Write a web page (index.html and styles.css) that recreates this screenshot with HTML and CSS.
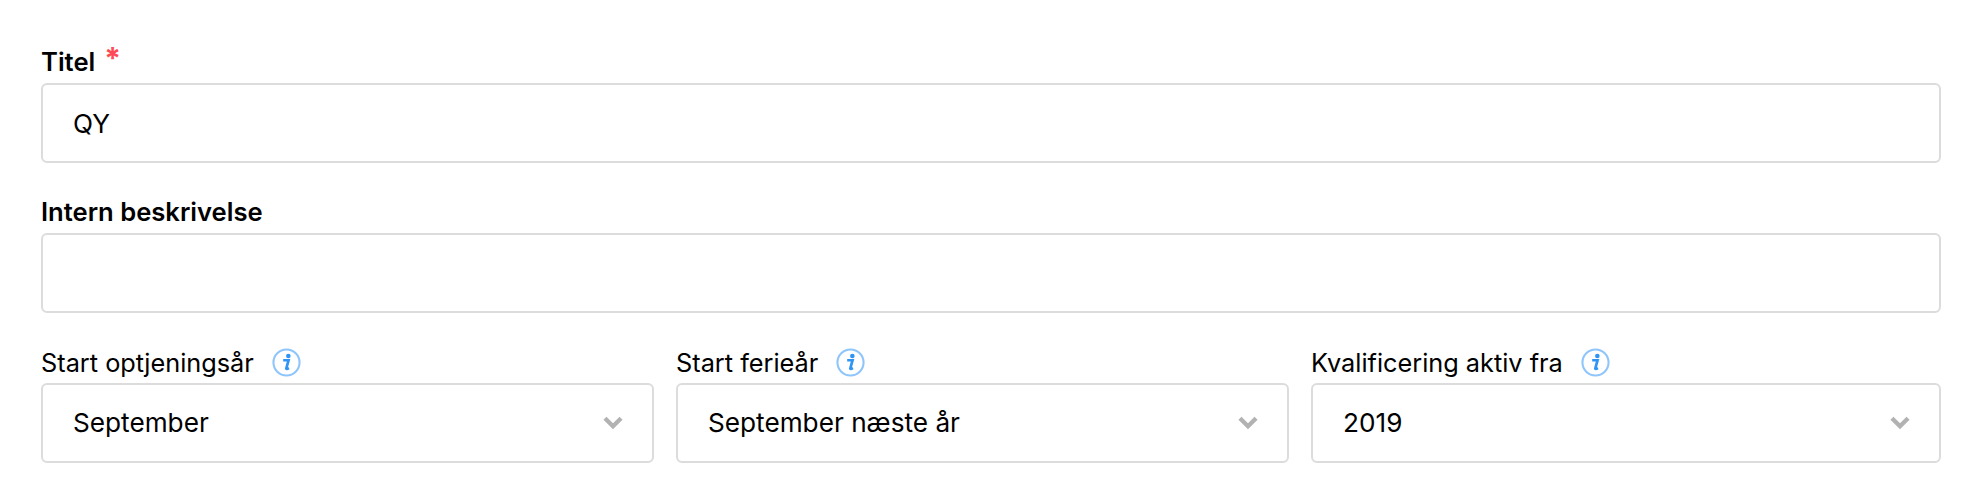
FILE: index.html
```html
<!DOCTYPE html>
<html lang="da">
<head>
  <meta charset="UTF-8">
  <title>Ferieregel</title>
  <link rel="stylesheet" href="styles.css">
</head>
<body>
  <form class="form">
    <div class="field field-title">
      <label class="label label-strong">Titel<span class="required">*</span></label>
      <div class="input">QY</div>
    </div>
    <div class="field field-desc">
      <label class="label label-strong">Intern beskrivelse</label>
      <div class="input"></div>
    </div>
    <div class="row">
      <div class="field">
        <label class="label"><span>Start optjeningsår</span><svg class="info" viewBox="0 0 28 28"><circle cx="14" cy="14" r="12.6" fill="none" stroke="#8ec5fb" stroke-width="2"/><circle cx="15.8" cy="7.8" r="2.2" fill="#2f95f5"/><path d="M10.8 11.8h5.2l-2.2 8c-.1.6.5.6 2.6-.4" fill="none" stroke="#2f95f5" stroke-width="2.6"/></svg></label>
        <div class="input select"><span>September</span><svg class="chevron" viewBox="0 0 20 14"><path d="M2.5 3l7.5 7.5L17.5 3" fill="none" stroke="#b2b2b2" stroke-width="4"/></svg></div>
      </div>
      <div class="field">
        <label class="label"><span>Start ferieår</span><svg class="info" viewBox="0 0 28 28"><circle cx="14" cy="14" r="12.6" fill="none" stroke="#8ec5fb" stroke-width="2"/><circle cx="15.8" cy="7.8" r="2.2" fill="#2f95f5"/><path d="M10.8 11.8h5.2l-2.2 8c-.1.6.5.6 2.6-.4" fill="none" stroke="#2f95f5" stroke-width="2.6"/></svg></label>
        <div class="input select"><span>September næste år</span><svg class="chevron" viewBox="0 0 20 14"><path d="M2.5 3l7.5 7.5L17.5 3" fill="none" stroke="#b2b2b2" stroke-width="4"/></svg></div>
      </div>
      <div class="field">
        <label class="label"><span>Kvalificering aktiv fra</span><svg class="info" viewBox="0 0 28 28"><circle cx="14" cy="14" r="12.6" fill="none" stroke="#8ec5fb" stroke-width="2"/><circle cx="15.8" cy="7.8" r="2.2" fill="#2f95f5"/><path d="M10.8 11.8h5.2l-2.2 8c-.1.6.5.6 2.6-.4" fill="none" stroke="#2f95f5" stroke-width="2.6"/></svg></label>
        <div class="input select"><span>2019</span><svg class="chevron" viewBox="0 0 20 14"><path d="M2.5 3l7.5 7.5L17.5 3" fill="none" stroke="#b2b2b2" stroke-width="4"/></svg></div>
      </div>
    </div>
  </form>
</body>
</html>
```
FILE: styles.css
```css
body {
  margin: 0;
  background: #fff;
  color: #000;
  font-family: "Inter", "Liberation Sans", sans-serif;
  font-size: 25.3px;
}
.form {
  padding: 42px 33px 28px 41px;
}
.field-desc {
  margin-top: 29px;
}
.row {
  display: grid;
  grid-template-columns: 613px 613px 1fr;
  column-gap: 22px;
  margin-top: 29px;
}
.label {
  display: flex;
  align-items: center;
  box-sizing: border-box;
  height: 41px;
}
.label-strong {
  font-size: 25.6px;
  font-weight: 600;
  padding-bottom: 2px;
}
.required {
  color: #ff4a55;
  font-size: 30px;
  font-weight: 700;
  margin-left: 9px;
  margin-top: -8px;
}
.input {
  box-sizing: border-box;
  height: 80px;
  padding: 0 30px;
  border: 2px solid #dcdcdc;
  border-radius: 6px;
  display: flex;
  align-items: center;
  font-size: 26.2px;
}
.select {
  justify-content: space-between;
  padding-bottom: 2px;
}
.info {
  width: 29px;
  height: 29px;
  margin-left: 18px;
}
.chevron {
  width: 22px;
  height: 15px;
  margin-right: -2px;
}
```
